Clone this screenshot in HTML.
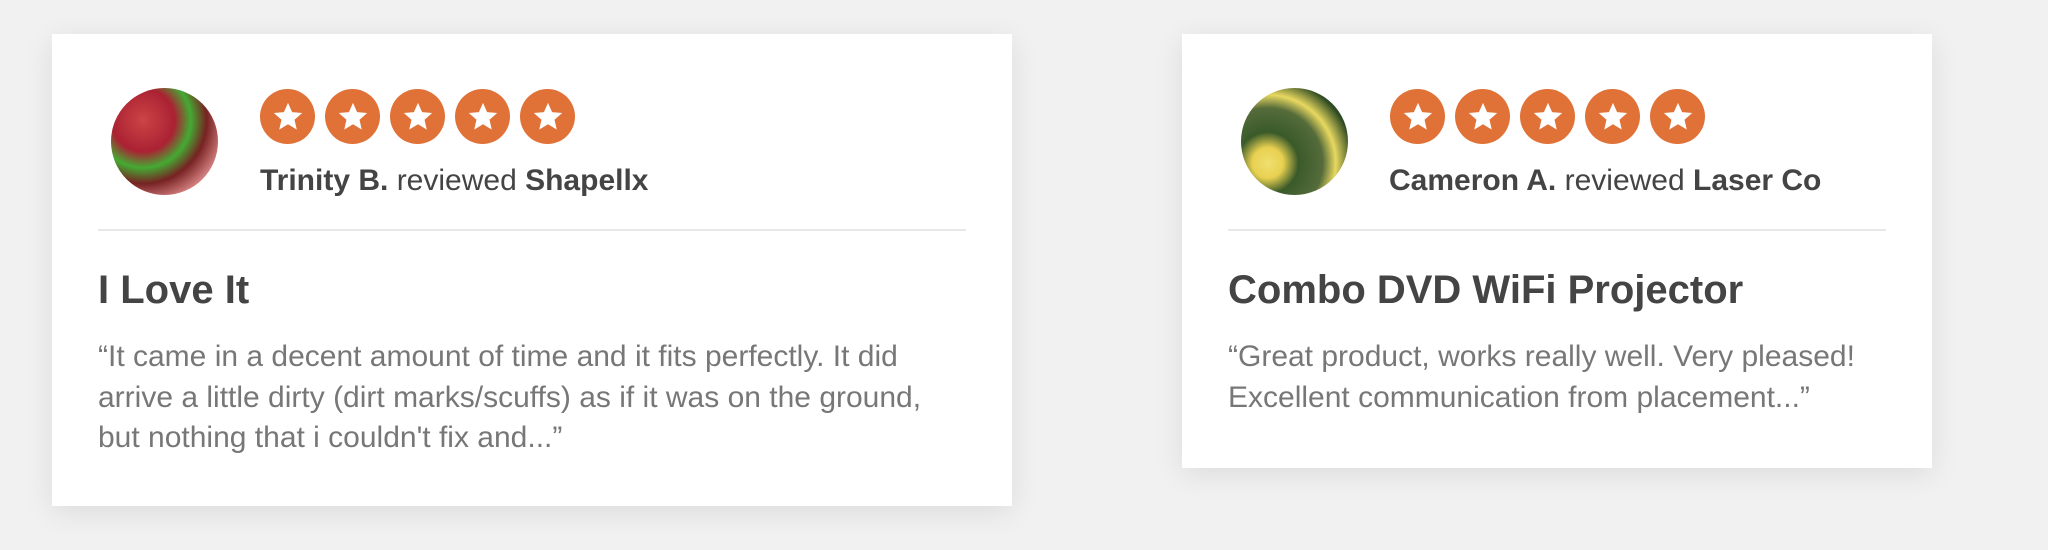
<!DOCTYPE html>
<html><head><meta charset="utf-8"><style>
html,body{margin:0;padding:0;width:2048px;height:550px;background:#f1f1f1;overflow:hidden;font-family:"Liberation Sans",Arial,sans-serif}
.card{position:absolute;background:#fff;box-shadow:0 6px 28px rgba(0,0,0,0.09)}
.av{position:absolute;width:107px;height:107px;border-radius:50%;overflow:hidden}
.stars{position:absolute;display:flex;gap:10px}
.star{width:55px;height:55px;border-radius:50%;background:#e07238;display:flex;align-items:center;justify-content:center}
.name{position:absolute;font-size:30px;color:#444;white-space:nowrap}
.name b{font-weight:bold}
.hr{position:absolute;height:2px;background:#e8e8e8}
.title{position:absolute;font-size:40px;font-weight:bold;color:#444;white-space:nowrap}
.body{position:absolute;font-size:30px;line-height:40.5px;color:#777;white-space:nowrap}
</style></head><body>
<div class="card" style="left:52px;top:34px;width:960px;height:472px">
  <div class="av" style="left:59px;top:54px;background:radial-gradient(circle at 30% 30%,#c44 0,#a23 30%,#4a3 45%,#722 60%,#d88 80%,#532 100%)"></div>
  <div class="stars" style="left:208px;top:55px">
    <div class="star"><svg width="34" height="34" viewBox="0 0 24 24"><path d="M12 2l2.9 6.6 7.1.6-5.4 4.7 1.6 7-6.2-3.8-6.2 3.8 1.6-7L2 9.2l7.1-.6z" fill="#fff"/></svg></div>
    <div class="star"><svg width="34" height="34" viewBox="0 0 24 24"><path d="M12 2l2.9 6.6 7.1.6-5.4 4.7 1.6 7-6.2-3.8-6.2 3.8 1.6-7L2 9.2l7.1-.6z" fill="#fff"/></svg></div>
    <div class="star"><svg width="34" height="34" viewBox="0 0 24 24"><path d="M12 2l2.9 6.6 7.1.6-5.4 4.7 1.6 7-6.2-3.8-6.2 3.8 1.6-7L2 9.2l7.1-.6z" fill="#fff"/></svg></div>
    <div class="star"><svg width="34" height="34" viewBox="0 0 24 24"><path d="M12 2l2.9 6.6 7.1.6-5.4 4.7 1.6 7-6.2-3.8-6.2 3.8 1.6-7L2 9.2l7.1-.6z" fill="#fff"/></svg></div>
    <div class="star"><svg width="34" height="34" viewBox="0 0 24 24"><path d="M12 2l2.9 6.6 7.1.6-5.4 4.7 1.6 7-6.2-3.8-6.2 3.8 1.6-7L2 9.2l7.1-.6z" fill="#fff"/></svg></div>
  </div>
  <div class="name" style="left:208px;top:130px"><b>Trinity B.</b> reviewed <b>Shapellx</b></div>
  <div class="hr" style="left:46px;top:195px;width:868px"></div>
  <div class="title" style="left:46px;top:234px">I Love It</div>
  <div class="body" style="left:46px;top:303px">“It came in a decent amount of time and it fits perfectly. It did<br>arrive a little dirty (dirt marks/scuffs) as if it was on the ground,<br>but nothing that i couldn't fix and...”</div>
</div>
<div class="card" style="left:1182px;top:34px;width:750px;height:434px">
  <div class="av" style="left:59px;top:54px;background:radial-gradient(circle at 25% 70%,#f0e070 0,#e8d050 14%,#3a5a2a 28%,#556b3a 50%,#e8d860 62%,#2e4a22 78%,#4a6a3a 100%)"></div>
  <div class="stars" style="left:208px;top:55px">
    <div class="star"><svg width="34" height="34" viewBox="0 0 24 24"><path d="M12 2l2.9 6.6 7.1.6-5.4 4.7 1.6 7-6.2-3.8-6.2 3.8 1.6-7L2 9.2l7.1-.6z" fill="#fff"/></svg></div>
    <div class="star"><svg width="34" height="34" viewBox="0 0 24 24"><path d="M12 2l2.9 6.6 7.1.6-5.4 4.7 1.6 7-6.2-3.8-6.2 3.8 1.6-7L2 9.2l7.1-.6z" fill="#fff"/></svg></div>
    <div class="star"><svg width="34" height="34" viewBox="0 0 24 24"><path d="M12 2l2.9 6.6 7.1.6-5.4 4.7 1.6 7-6.2-3.8-6.2 3.8 1.6-7L2 9.2l7.1-.6z" fill="#fff"/></svg></div>
    <div class="star"><svg width="34" height="34" viewBox="0 0 24 24"><path d="M12 2l2.9 6.6 7.1.6-5.4 4.7 1.6 7-6.2-3.8-6.2 3.8 1.6-7L2 9.2l7.1-.6z" fill="#fff"/></svg></div>
    <div class="star"><svg width="34" height="34" viewBox="0 0 24 24"><path d="M12 2l2.9 6.6 7.1.6-5.4 4.7 1.6 7-6.2-3.8-6.2 3.8 1.6-7L2 9.2l7.1-.6z" fill="#fff"/></svg></div>
  </div>
  <div class="name" style="left:207px;top:130px"><b>Cameron A.</b> reviewed <b>Laser Co</b></div>
  <div class="hr" style="left:46px;top:195px;width:658px"></div>
  <div class="title" style="left:46px;top:234px">Combo DVD WiFi Projector</div>
  <div class="body" style="left:46px;top:303px">“Great product, works really well. Very pleased!<br>Excellent communication from placement...”</div>
</div>
</body></html>
